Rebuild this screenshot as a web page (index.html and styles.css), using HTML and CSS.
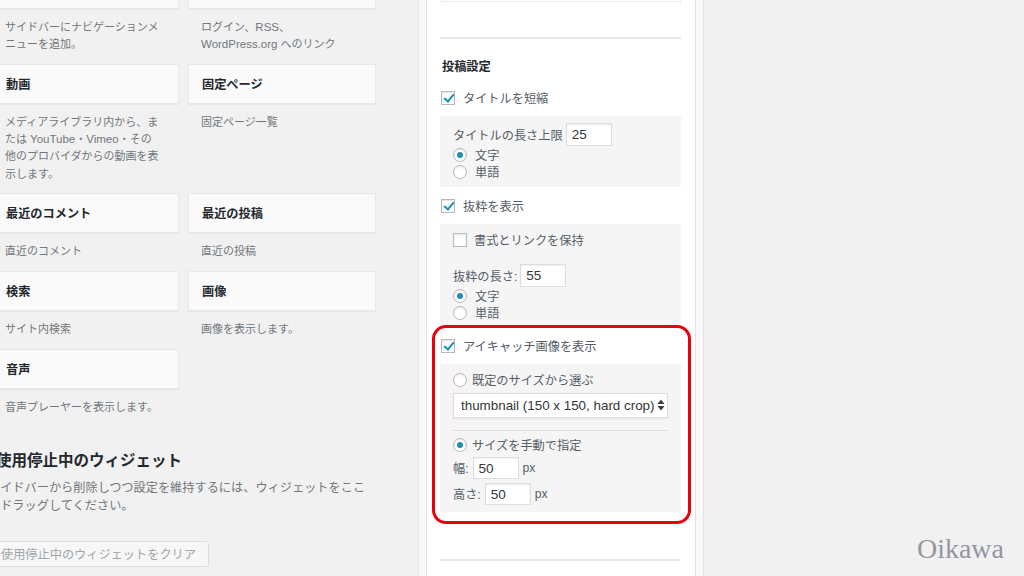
FILE: index.html
```html
<!DOCTYPE html>
<html lang="ja">
<head>
    <meta charset="UTF-8">
    <meta name="viewport" content="width=device-width, initial-scale=1.0">
    <title>ウィジェット</title>
    <link rel="stylesheet" href="styles.css">
</head>
<body>

<div class="screen">
    <!-- Available widgets -->
    <div class="available">
        <div class="widget-grid">
            <div class="widget-item">
                <div class="widget-card"><h3>ナビゲーションメニュー</h3></div>
                <p class="widget-desc">サイドバーにナビゲーションメニューを追加。</p>
            </div>
            <div class="widget-item">
                <div class="widget-card"><h3>メタ情報</h3></div>
                <p class="widget-desc">ログイン、<span class="latin">RSS</span>、<span class="latin">WordPress.org</span> へのリンク</p>
            </div>
            <div class="widget-item">
                <div class="widget-card"><h3>動画</h3></div>
                <p class="widget-desc">メディアライブラリ内から、または <span class="latin">YouTube</span>・<span class="latin">Vimeo</span>・その他のプロバイダからの動画を表示します。</p>
            </div>
            <div class="widget-item">
                <div class="widget-card"><h3>固定ページ</h3></div>
                <p class="widget-desc">固定ページ一覧</p>
            </div>
            <div class="widget-item">
                <div class="widget-card"><h3>最近のコメント</h3></div>
                <p class="widget-desc">直近のコメント</p>
            </div>
            <div class="widget-item">
                <div class="widget-card"><h3>最近の投稿</h3></div>
                <p class="widget-desc">直近の投稿</p>
            </div>
            <div class="widget-item">
                <div class="widget-card"><h3>検索</h3></div>
                <p class="widget-desc">サイト内検索</p>
            </div>
            <div class="widget-item">
                <div class="widget-card"><h3>画像</h3></div>
                <p class="widget-desc">画像を表示します。</p>
            </div>
            <div class="widget-item">
                <div class="widget-card"><h3>音声</h3></div>
                <p class="widget-desc">音声プレーヤーを表示します。</p>
            </div>
        </div>

        <!-- Inactive widgets -->
        <div class="inactive">
            <h2>使用停止中のウィジェット</h2>
            <p>サイドバーから削除しつつ設定を維持するには、ウィジェットをここにドラッグしてください。</p>
            <button class="clear-button" disabled>使用停止中のウィジェットをクリア</button>
        </div>
    </div>

    <!-- Sidebar with the open widget -->
    <div class="sidebar-holder">
        <div class="widget-inside">
            <div class="top-field"></div>
            <hr class="divider">

            <h4 class="section-title">投稿設定</h4>

            <label class="check-row"><input type="checkbox" class="cb" checked>タイトルを短縮</label>
            <div class="sub-box">
                <div class="field-row">
                    <span>タイトルの長さ上限</span>
                    <input type="text" class="text-input" value="25">
                </div>
                <label class="radio-row"><input type="radio" class="rd" name="titleUnit" checked>文字</label>
                <label class="radio-row"><input type="radio" class="rd" name="titleUnit">単語</label>
            </div>

            <label class="check-row"><input type="checkbox" class="cb" checked>抜粋を表示</label>
            <div class="sub-box sub-box-excerpt">
                <label class="check-row inner"><input type="checkbox" class="cb">書式とリンクを保持</label>
                <div class="field-row excerpt-length">
                    <span>抜粋の長さ:</span>
                    <input type="text" class="text-input" value="55">
                </div>
                <label class="radio-row"><input type="radio" class="rd" name="excerptUnit" checked>文字</label>
                <label class="radio-row"><input type="radio" class="rd" name="excerptUnit">単語</label>
            </div>

            <label class="check-row"><input type="checkbox" class="cb" checked>アイキャッチ画像を表示</label>
            <div class="sub-box sub-box-thumb">
                <label class="radio-row tight"><input type="radio" class="rd" name="thumbSize">既定のサイズから選ぶ</label>
                <div class="select-wrap">
                    <select class="size-select">
                        <option>thumbnail (150 x 150, hard crop)</option>
                    </select>
                    <svg class="select-arrows" width="8" height="12" viewBox="0 0 8 12">
                        <polygon points="0.5,5 4,0.5 7.5,5" fill="#3c3c3c"/>
                        <polygon points="0.5,7 4,11.5 7.5,7" fill="#3c3c3c"/>
                    </svg>
                </div>
                <hr class="inner-divider">
                <label class="radio-row tight manual"><input type="radio" class="rd" name="thumbSize" checked>サイズを手動で指定</label>
                <div class="field-row size-row first">
                    <span>幅:</span>
                    <input type="text" class="text-input" value="50">
                    <span>px</span>
                </div>
                <div class="field-row size-row">
                    <span>高さ:</span>
                    <input type="text" class="text-input" value="50">
                    <span>px</span>
                </div>
            </div>

            <hr class="divider divider-bottom">
        </div>
    </div>

    <!-- annotation -->
    <div class="highlight"></div>
    <div class="signature">Oikawa</div>
</div>

</body>
</html>
```

FILE: styles.css
```css
body {
    margin: 0;
    background-color: #f1f1f1;
    font-family: "Liberation Sans", "Noto Sans CJK JP", sans-serif;
    color: #444;
    overflow: hidden;
}

.screen {
    position: relative;
    display: flex;
    align-items: flex-start;
    height: 576px;
    overflow: hidden;
}

/* Available widgets */
.available {
    flex-shrink: 0;
    width: 384px;
    margin: -31px 42px 0 -8px;
}

.widget-grid {
    display: grid;
    grid-template-columns: 187px 188px;
    column-gap: 9px;
    align-items: start;
}

.widget-card {
    box-sizing: border-box;
    height: 40px;
    display: flex;
    align-items: center;
    padding: 0 13px;
    background-color: #fafafa;
    border: 1px solid #e8e8e8;
    box-shadow: 0 1px 1px rgba(0, 0, 0, 0.04);
}

.widget-card h3 {
    margin: 0;
    font-size: 12.2px;
    font-weight: bold;
    color: #23282d;
}

.widget-desc {
    margin: 0;
    padding: 10px 19px 10.3px 13px;
    font-size: 11px;
    line-height: 17.3px;
    color: #72777c;
}

/* latin words render a little larger next to the japanese text */
.latin {
    font-size: 11.5px;
}

.inactive {
    margin-left: -4px;
}

.inactive h2 {
    margin: 25px 0 8px 8px;
    font-size: 15.5px;
    line-height: 20px;
    font-weight: bold;
    color: #23282d;
}

.inactive p {
    margin: 0;
    width: 385px;
    font-size: 12.2px;
    line-height: 18px;
    color: #72777c;
}

.clear-button {
    margin-top: 26px;
    height: 26px;
    padding: 0 12px;
    font-family: inherit;
    font-size: 12.2px;
    color: #a0a5aa;
    background-color: #f7f7f7;
    border: 1px solid #dddddd;
    border-radius: 3px;
}

/* Sidebar */
.sidebar-holder {
    flex-shrink: 0;
    box-sizing: border-box;
    width: 286px;
    height: 576px;
    padding: 0 7px;
    background-color: #f9f9f9;
    border-left: 1px solid #e5e5e5;
    border-right: 1px solid #e5e5e5;
}

.widget-inside {
    height: 100%;
    padding: 0 14px 0 13px;
    background-color: #fff;
    border-left: 1px solid #e2e2e2;
    border-right: 1px solid #e2e2e2;
    font-size: 12.2px;
    color: #555d66;
}

.top-field {
    height: 1px;
    border: 1px solid #eeeeee;
    border-top: none;
}

.divider {
    height: 0;
    margin: 35px 0 0;
    border: none;
    border-top: 2px solid #e8e8e8;
}

.divider-bottom {
    margin-top: 47px;
}

.section-title {
    margin: 19px 0 13px 2px;
    font-size: 12.2px;
    line-height: 18px;
    font-weight: bold;
    color: #23282d;
}

.check-row {
    display: flex;
    align-items: center;
    gap: 8px;
    height: 18px;
    margin: 10px 0 9px 1px;
}

.check-row.inner {
    margin: 0;
    gap: 7px;
}

.sub-box {
    padding: 7px 13px 6px;
    background-color: #f5f5f5;
}

.sub-box-excerpt {
    padding-bottom: 5px;
}

.sub-box-thumb {
    padding-bottom: 7px;
}

.field-row {
    display: flex;
    align-items: center;
    gap: 3px;
    height: 23px;
}

.excerpt-length {
    margin-top: 15px;
}

.size-row {
    gap: 4px;
    height: 22px;
    margin-top: 4px;
}

.size-row.first {
    margin-top: 3px;
}

.radio-row {
    display: flex;
    align-items: center;
    gap: 8px;
    height: 17.5px;
}

.radio-row.tight {
    gap: 5px;
}

.radio-row.manual {
    margin-top: 6px;
}

/* Form controls */
.cb,
.rd {
    appearance: none;
    -webkit-appearance: none;
    box-sizing: border-box;
    position: relative;
    flex-shrink: 0;
    width: 14px;
    height: 14px;
    margin: 0;
    background-color: #fff;
    border: 1px solid #b4b9be;
    box-shadow: inset 0 1px 2px rgba(0, 0, 0, 0.1);
}

.cb:checked::before {
    content: "";
    position: absolute;
    left: 3.5px;
    top: -0.5px;
    width: 4px;
    height: 8px;
    border-right: 2.5px solid #1e8cbe;
    border-bottom: 2.5px solid #1e8cbe;
    transform: rotate(40deg);
}

.rd {
    border-radius: 50%;
}

.rd:checked::before {
    content: "";
    position: absolute;
    left: 3px;
    top: 3px;
    width: 6px;
    height: 6px;
    border-radius: 50%;
    background-color: #1e8cbe;
}

.text-input {
    box-sizing: border-box;
    width: 46px;
    height: 100%;
    margin: 0;
    padding: 0 5px;
    font-family: "Liberation Sans", sans-serif;
    font-size: 13.5px;
    color: #32373c;
    background-color: #fff;
    border: 1px solid #dddddd;
    box-shadow: inset 0 1px 2px rgba(0, 0, 0, 0.07);
    outline: none;
}

.select-wrap {
    position: relative;
    margin-top: 4px;
}

.size-select {
    appearance: none;
    -webkit-appearance: none;
    box-sizing: border-box;
    display: block;
    width: 215px;
    height: 25px;
    padding: 0 0 0 7px;
    font-family: "Liberation Sans", sans-serif;
    font-size: 13.4px;
    color: #32373c;
    background-color: #fff;
    border: 1px solid #dddddd;
    border-radius: 0;
    box-shadow: 0 1px 2px rgba(0, 0, 0, 0.07);
}

.select-arrows {
    position: absolute;
    right: 3px;
    top: 6.5px;
}

.inner-divider {
    height: 0;
    margin: 12px 0 0;
    border: none;
    border-top: 1px solid #dcdcdc;
}

/* Annotation */
.highlight {
    position: absolute;
    left: 432px;
    top: 325px;
    box-sizing: border-box;
    width: 259px;
    height: 199px;
    border: 3px solid #e8000d;
    border-radius: 14px;
    pointer-events: none;
}

.signature {
    position: absolute;
    right: 20px;
    bottom: 13px;
    font-family: "Liberation Serif", serif;
    font-size: 28px;
    line-height: 28px;
    color: #9596a0;
}
```
